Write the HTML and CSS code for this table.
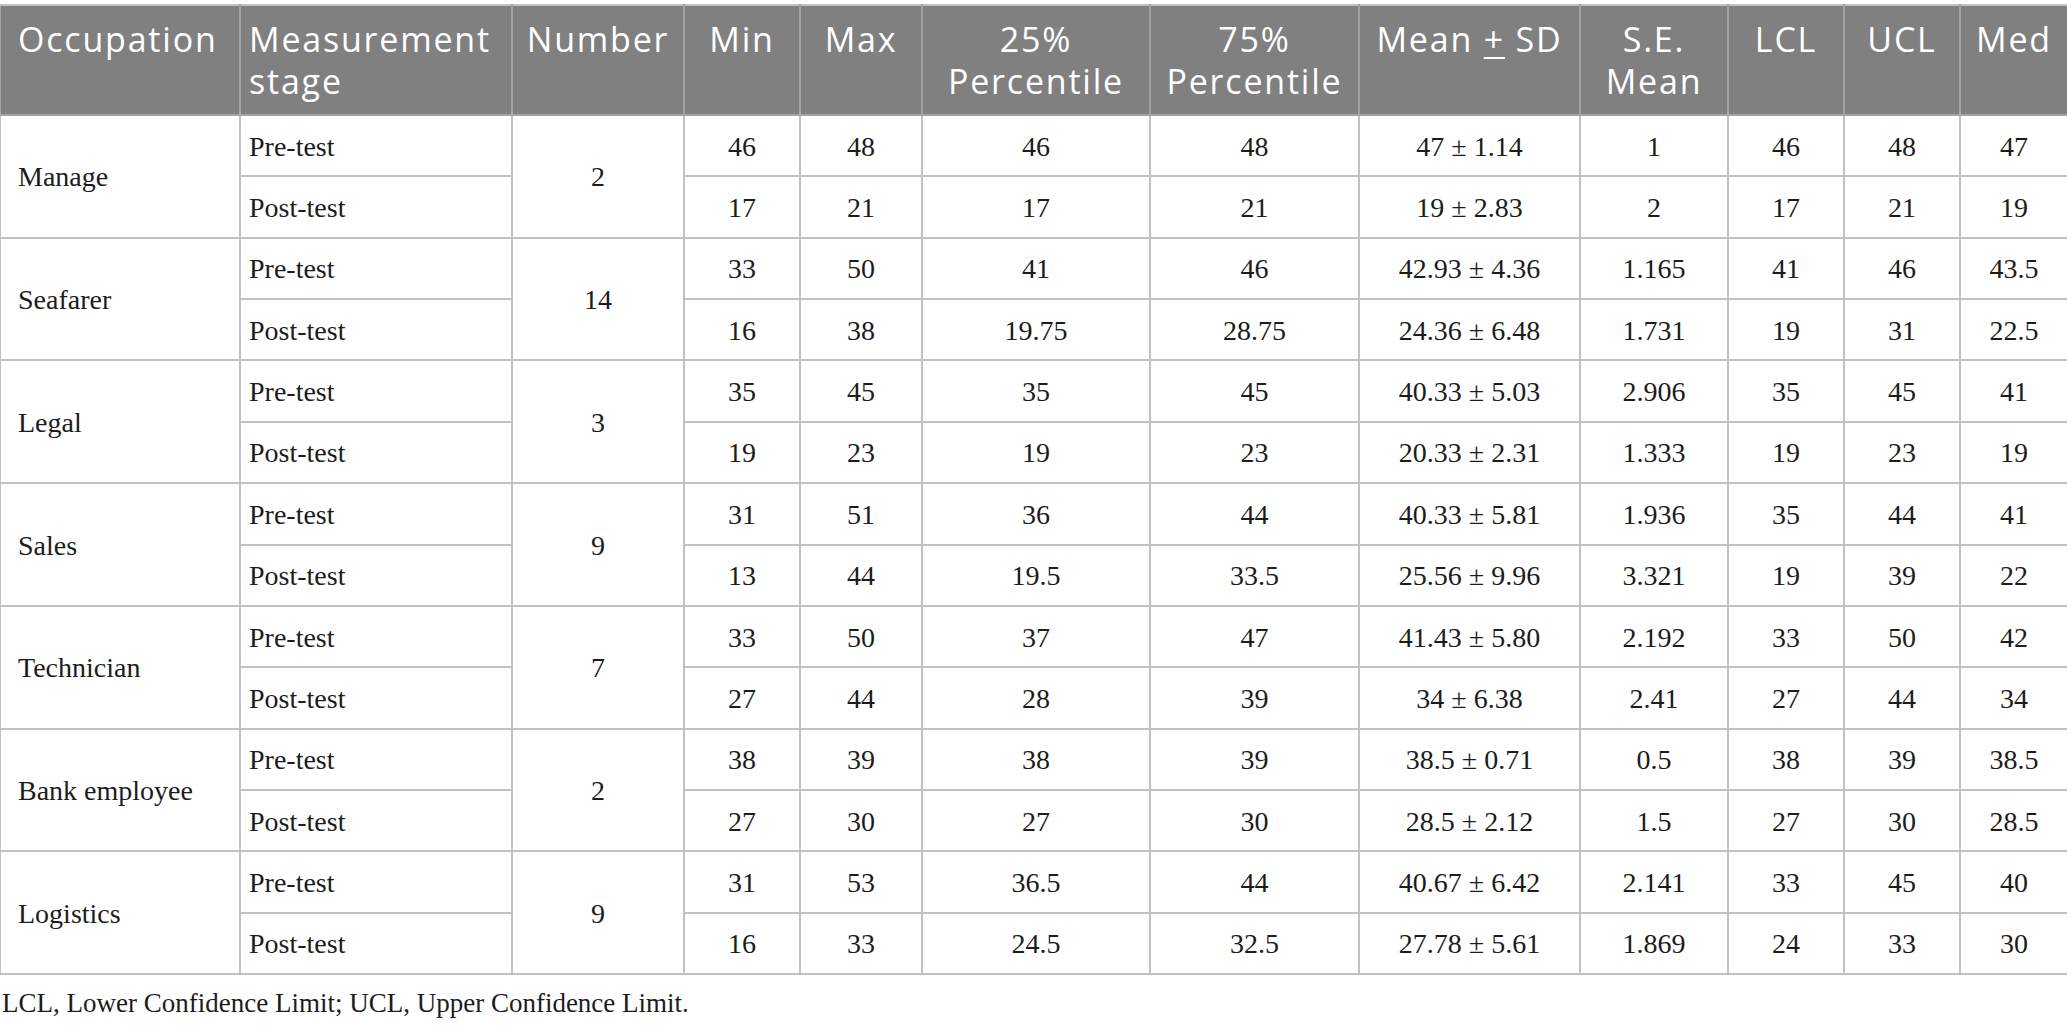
FILE: index.html
```html
<!DOCTYPE html>
<html lang="en">
<head>
<meta charset="utf-8">
<title>Occupation table</title>
<link rel="stylesheet" href="styles.css">
</head>
<body>
<table class="stats">
  <colgroup>
    <col class="c-occ"><col class="c-stage"><col class="c-num"><col class="c-min"><col class="c-max">
    <col class="c-p25"><col class="c-p75"><col class="c-mean"><col class="c-se"><col class="c-lcl"><col class="c-ucl"><col class="c-med">
  </colgroup>
  <thead>
    <tr class="head">
      <th class="left first">Occupation</th>
      <th class="left">Measurement stage</th>
      <th>Number</th>
      <th>Min</th>
      <th>Max</th>
      <th>25% Percentile</th>
      <th>75% Percentile</th>
      <th>Mean <span class="pm">+</span> SD</th>
      <th>S.E. Mean</th>
      <th>LCL</th>
      <th>UCL</th>
      <th>Med</th>
    </tr>
  </thead>
  <tbody>
    <tr><td class="left first" rowspan="2">Manage</td><td class="left">Pre-test</td><td rowspan="2">2</td><td>46</td><td>48</td><td>46</td><td>48</td><td>47 ± 1.14</td><td>1</td><td>46</td><td>48</td><td>47</td></tr>
    <tr><td class="left">Post-test</td><td>17</td><td>21</td><td>17</td><td>21</td><td>19 ± 2.83</td><td>2</td><td>17</td><td>21</td><td>19</td></tr>
    <tr><td class="left first" rowspan="2">Seafarer</td><td class="left">Pre-test</td><td rowspan="2">14</td><td>33</td><td>50</td><td>41</td><td>46</td><td>42.93 ± 4.36</td><td>1.165</td><td>41</td><td>46</td><td>43.5</td></tr>
    <tr><td class="left">Post-test</td><td>16</td><td>38</td><td>19.75</td><td>28.75</td><td>24.36 ± 6.48</td><td>1.731</td><td>19</td><td>31</td><td>22.5</td></tr>
    <tr><td class="left first" rowspan="2">Legal</td><td class="left">Pre-test</td><td rowspan="2">3</td><td>35</td><td>45</td><td>35</td><td>45</td><td>40.33 ± 5.03</td><td>2.906</td><td>35</td><td>45</td><td>41</td></tr>
    <tr><td class="left">Post-test</td><td>19</td><td>23</td><td>19</td><td>23</td><td>20.33 ± 2.31</td><td>1.333</td><td>19</td><td>23</td><td>19</td></tr>
    <tr><td class="left first" rowspan="2">Sales</td><td class="left">Pre-test</td><td rowspan="2">9</td><td>31</td><td>51</td><td>36</td><td>44</td><td>40.33 ± 5.81</td><td>1.936</td><td>35</td><td>44</td><td>41</td></tr>
    <tr><td class="left">Post-test</td><td>13</td><td>44</td><td>19.5</td><td>33.5</td><td>25.56 ± 9.96</td><td>3.321</td><td>19</td><td>39</td><td>22</td></tr>
    <tr><td class="left first" rowspan="2">Technician</td><td class="left">Pre-test</td><td rowspan="2">7</td><td>33</td><td>50</td><td>37</td><td>47</td><td>41.43 ± 5.80</td><td>2.192</td><td>33</td><td>50</td><td>42</td></tr>
    <tr><td class="left">Post-test</td><td>27</td><td>44</td><td>28</td><td>39</td><td>34 ± 6.38</td><td>2.41</td><td>27</td><td>44</td><td>34</td></tr>
    <tr><td class="left first" rowspan="2">Bank employee</td><td class="left">Pre-test</td><td rowspan="2">2</td><td>38</td><td>39</td><td>38</td><td>39</td><td>38.5 ± 0.71</td><td>0.5</td><td>38</td><td>39</td><td>38.5</td></tr>
    <tr><td class="left">Post-test</td><td>27</td><td>30</td><td>27</td><td>30</td><td>28.5 ± 2.12</td><td>1.5</td><td>27</td><td>30</td><td>28.5</td></tr>
    <tr><td class="left first" rowspan="2">Logistics</td><td class="left">Pre-test</td><td rowspan="2">9</td><td>31</td><td>53</td><td>36.5</td><td>44</td><td>40.67 ± 6.42</td><td>2.141</td><td>33</td><td>45</td><td>40</td></tr>
    <tr><td class="left">Post-test</td><td>16</td><td>33</td><td>24.5</td><td>32.5</td><td>27.78 ± 5.61</td><td>1.869</td><td>24</td><td>33</td><td>30</td></tr>
  </tbody>
</table>
<p class="note">LCL, Lower Confidence Limit; UCL, Upper Confidence Limit.</p>
</body>
</html>
```

FILE: styles.css
```css
html, body {
  margin: 0;
  padding: 0;
  background: #ffffff;
}

body {
  font-family: "Liberation Serif", "Times New Roman", serif;
  color: #1c1c1c;
  overflow: hidden;
}

.stats {
  border-collapse: collapse;
  table-layout: fixed;
  width: 2068px;
  margin-top: 4px;
  margin-left: -1px;
}

.c-occ { width: 240px; }
.c-stage { width: 272px; }
.c-num { width: 172px; }
.c-min { width: 116px; }
.c-max { width: 122px; }
.c-p25 { width: 228px; }
.c-p75 { width: 209px; }
.c-mean { width: 221px; }
.c-se { width: 148px; }
.c-lcl { width: 116px; }
.c-ucl { width: 116px; }
.c-med { width: 108px; }

.stats th,
.stats td {
  border: 2px solid #c2c2c2;
  padding: 0 8px;
  text-align: center;
}

.stats th {
  background: #808080;
  color: #ffffff;
  font-family: "Open Sans", "Noto Sans", sans-serif;
  font-weight: 400;
  font-size: 34px;
  line-height: 42px;
  letter-spacing: 1.8px;
  vertical-align: top;
  padding-top: 12px;
  border-color: #a3a3a3;
  border-top-color: #c2c2c2;
}

.head {
  height: 110px;
}

.stats td {
  font-size: 28px;
  line-height: 32px;
  height: 57.36px;
  vertical-align: middle;
  padding-top: 2px;
}

.stats .left {
  text-align: left;
}

.stats .first {
  padding-left: 17px;
}

.pm {
  text-decoration: underline;
  text-underline-offset: 5px;
  text-decoration-thickness: 2px;
}

.note {
  margin: 9px 0 0 2px;
  font-size: 27px;
  line-height: 38px;
}
```
